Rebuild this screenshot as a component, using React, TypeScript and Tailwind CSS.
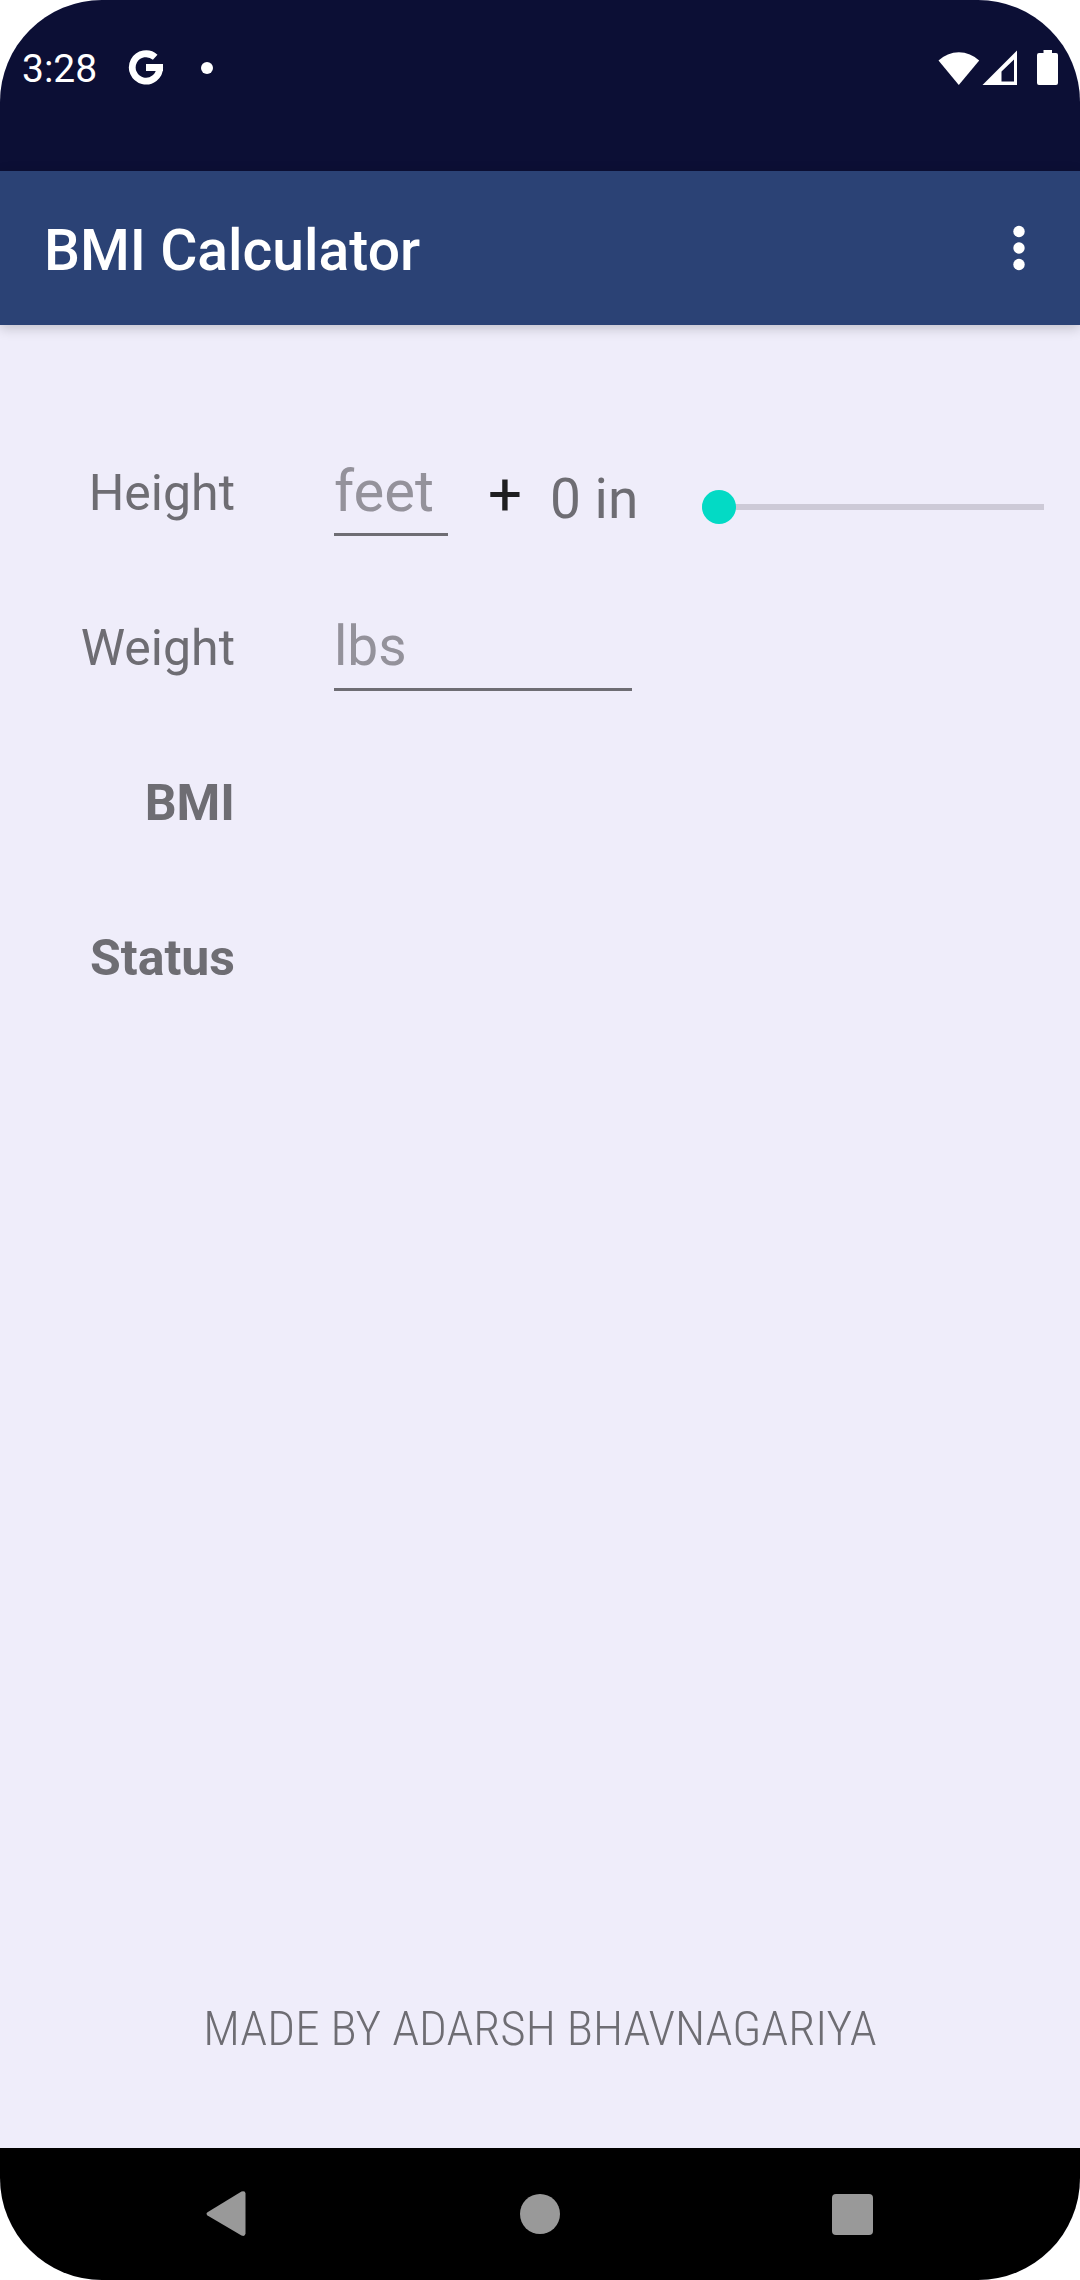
import { useState } from 'react';

function StatusBar() {
  return (
    <div className="flex h-[171px] items-start justify-between bg-[#0c0f35] pt-11 pr-[21px] pl-[22px] text-white">
      <div className="flex h-12 items-center">
        <time className="w-[106px] pt-0.5 text-[39px] leading-[48px]">3:28</time>
        <svg className="h-9 w-9" viewBox="0 0 36 36" aria-label="Google">
          <path
            d="M27.200 7.300A13.700 13.700 0 1 0 31.700 17.500M18 17.500H35"
            fill="none"
            stroke="currentColor"
            strokeWidth="6.800"
          />
        </svg>
        <span className="ml-[37px] h-3 w-3 rounded-full bg-white" />
      </div>
      <div className="flex h-12 items-center">
        <svg className="h-9 w-[42px]" viewBox="0 0 42 36" fill="currentColor" aria-label="Wi-Fi">
          <path d="M0.5 10.500A29.500 29.500 0 0 1 41.200 10.500L20.800 35Z" />
        </svg>
        <svg className="ml-0.5 h-9 w-9" viewBox="0 0 36 36" fill="currentColor" aria-label="Signal">
          <path fillRule="evenodd" d="M35 0.500V35H0.500ZM32 9.500L19.500 21.500V31.500H32Z" />
        </svg>
        <svg className="ml-[18px] h-9 w-[23px]" viewBox="0 0 23 36" fill="currentColor" aria-label="Battery">
          <path d="M7.500 -0.500H16V3H20Q22 3 22 5V33Q22 35 20 35H3Q1 35 1 33V5Q1 3 3 3H7.500Z" />
        </svg>
      </div>
    </div>
  );
}

function AppBar() {
  return (
    <header className="relative z-10 flex h-[154px] items-center justify-between bg-[#2b4275] pr-8 pl-11 text-white shadow-[0_3px_12px_rgba(0,0,0,0.2)]">
      <h1 className="pt-1.5 text-[57px] leading-[64px] font-medium">BMI Calculator</h1>
      <button type="button" aria-label="More options" className="flex h-16 w-[58px] items-center justify-center">
        <svg className="h-12 w-3" viewBox="0 0 12 48" fill="currentColor">
          <circle cx="6" cy="7.500" r="5.700" />
          <circle cx="6" cy="24" r="5.700" />
          <circle cx="6" cy="40.500" r="5.700" />
        </svg>
      </button>
    </header>
  );
}

const rowClass = 'flex h-[155px] items-center gap-[99px]';
const labelClass = 'w-[235px] shrink-0 text-right text-[50px] leading-[60px]';
const inputClass =
  'h-[86px] border-b-[3px] border-[#6e6d73] bg-transparent text-[#6e6d73] outline-none placeholder:text-[#94929b] placeholder:opacity-100';

function status(bmi: number) {
  if (bmi < 18.5) return 'Underweight';
  if (bmi < 25) return 'Normal';
  if (bmi < 30) return 'Overweight';
  return 'Obese';
}

function Calculator() {
  const [feet, setFeet] = useState('');
  const [inches, setInches] = useState(0);
  const [weight, setWeight] = useState('');
  const total = Number(feet) * 12 + inches;
  const bmi = feet && weight && total > 0 ? (Number(weight) * 703) / (total * total) : null;

  return (
    <form className="pt-[90px] pr-9 text-[#6e6d73]">
      <div className={rowClass}>
        <label htmlFor="feet" className={labelClass}>
          Height
        </label>
        <div className="flex flex-1 items-center">
          <input
            id="feet"
            className={`${inputClass} w-[114px] text-[58px]`}
            placeholder="feet"
            inputMode="numeric"
            value={feet}
            onChange={(e) => setFeet(e.target.value)}
          />
          <span className="w-[102px] pt-1 pl-3 text-center text-[60px] leading-[64px] text-[#1f1f21]">+</span>
          <div className="flex h-[76px] flex-1 items-end">
            <label htmlFor="inches" className="w-[152px] text-[55px] leading-[64px]">
              {inches} in
            </label>
            <input
              id="inches"
              type="range"
              min="0"
              max="11"
              value={inches}
              onChange={(e) => setInches(Number(e.target.value))}
              className="h-12 min-w-0 flex-1 appearance-none bg-transparent [&::-webkit-slider-runnable-track]:h-1.5 [&::-webkit-slider-runnable-track]:bg-[#cdcad7] [&::-webkit-slider-thumb]:-mt-3.5 [&::-webkit-slider-thumb]:h-[34px] [&::-webkit-slider-thumb]:w-[34px] [&::-webkit-slider-thumb]:appearance-none [&::-webkit-slider-thumb]:rounded-full [&::-webkit-slider-thumb]:bg-[#03dac5]"
            />
          </div>
        </div>
      </div>
      <div className={rowClass}>
        <label htmlFor="weight" className={labelClass}>
          Weight
        </label>
        <input
          id="weight"
          className={`${inputClass} w-[298px] text-[55px]`}
          placeholder="lbs"
          inputMode="numeric"
          value={weight}
          onChange={(e) => setWeight(e.target.value)}
        />
      </div>
      <div className={rowClass}>
        <span className={`${labelClass} font-bold`}>BMI</span>
        <output className="text-[50px]">{bmi === null ? '' : bmi.toFixed(1)}</output>
      </div>
      <div className={rowClass}>
        <span className={`${labelClass} font-bold`}>Status</span>
        <output className="text-[50px]">{bmi === null ? '' : status(bmi)}</output>
      </div>
    </form>
  );
}

function NavBar() {
  const button = 'flex flex-1 items-center justify-center';
  return (
    <nav className="flex h-[132px] bg-black px-[72px] text-[#999999]">
      <button type="button" aria-label="Back" className={button}>
        <svg className="h-12 w-11" viewBox="0 0 44 48" fill="currentColor">
          <path d="M1.500 22.200L35.500 1.500Q39.500 0.500 39.500 3.500V43.500Q39 47 35.500 45.500L1.500 25.500Q-0.500 23.800 1.500 22.200Z" />
        </svg>
      </button>
      <button type="button" aria-label="Home" className={button}>
        <span className="h-10 w-10 rounded-full bg-[#999999]" />
      </button>
      <button type="button" aria-label="Recent apps" className={button}>
        <span className="h-[41px] w-[41px] rounded-[4px] bg-[#999999]" />
      </button>
    </nav>
  );
}

export default function App() {
  return (
    <div className="min-h-screen bg-white font-['Roboto',sans-serif]">
      <div className="flex min-h-screen flex-col overflow-hidden rounded-[102px] bg-[#efedfa]">
        <StatusBar />
        <AppBar />
        <main className="flex flex-1 flex-col justify-between">
          <Calculator />
          <footer className="pb-[89px] text-center font-['Roboto_Condensed','Liberation_Sans_Narrow','Roboto',sans-serif] text-[49px] leading-[60px] font-light text-[#6e6d73]">
            MADE BY ADARSH BHAVNAGARIYA
          </footer>
        </main>
        <NavBar />
      </div>
    </div>
  );
}
